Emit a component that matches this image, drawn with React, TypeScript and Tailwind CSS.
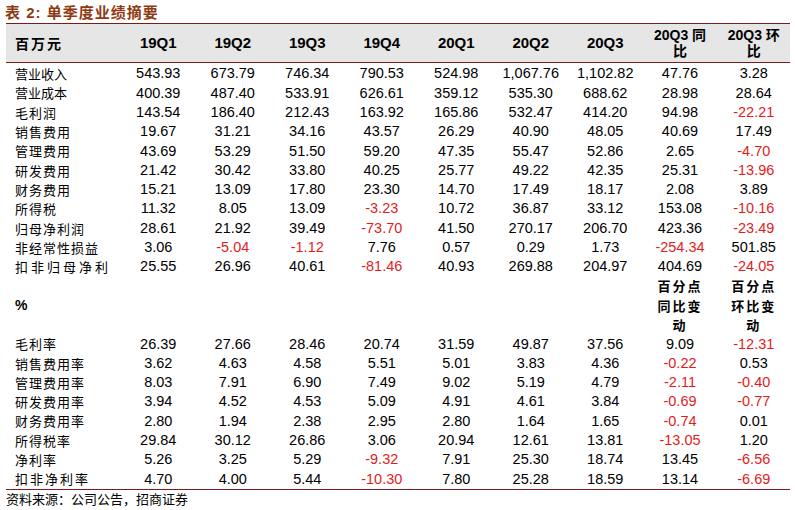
const cols = ["19Q1", "19Q2", "19Q3", "19Q4", "20Q1", "20Q2", "20Q3"];

const amounts: [string, string, string[]][] = [
  ["营业收入", "", ["543.93", "673.79", "746.34", "790.53", "524.98", "1,067.76", "1,102.82", "47.76", "3.28"]],
  ["营业成本", "", ["400.39", "487.40", "533.91", "626.61", "359.12", "535.30", "688.62", "28.98", "28.64"]],
  ["毛利润", "tracking-[1px]", ["143.54", "186.40", "212.43", "163.92", "165.86", "532.47", "414.20", "94.98", "-22.21"]],
  ["销售费用", "tracking-[1px]", ["19.67", "31.21", "34.16", "43.57", "26.29", "40.90", "48.05", "40.69", "17.49"]],
  ["管理费用", "tracking-[1px]", ["43.69", "53.29", "51.50", "59.20", "47.35", "55.47", "52.86", "2.65", "-4.70"]],
  ["研发费用", "tracking-[1px]", ["21.42", "30.42", "33.80", "40.25", "25.77", "49.22", "42.35", "25.31", "-13.96"]],
  ["财务费用", "tracking-[1px]", ["15.21", "13.09", "17.80", "23.30", "14.70", "17.49", "18.17", "2.08", "3.89"]],
  ["所得税", "tracking-[1px]", ["11.32", "8.05", "13.09", "-3.23", "10.72", "36.87", "33.12", "153.08", "-10.16"]],
  ["归母净利润", "tracking-[1px]", ["28.61", "21.92", "39.49", "-73.70", "41.50", "270.17", "206.70", "423.36", "-23.49"]],
  ["非经常性损益", "tracking-[1px]", ["3.06", "-5.04", "-1.12", "7.76", "0.57", "0.29", "1.73", "-254.34", "501.85"]],
  ["扣非归母净利", "tracking-[3px]", ["25.55", "26.96", "40.61", "-81.46", "40.93", "269.88", "204.97", "404.69", "-24.05"]],
];

const ratios: [string, string, string[]][] = [
  ["毛利率", "tracking-[1px]", ["26.39", "27.66", "28.46", "20.74", "31.59", "49.87", "37.56", "9.09", "-12.31"]],
  ["销售费用率", "tracking-[1px]", ["3.62", "4.63", "4.58", "5.51", "5.01", "3.83", "4.36", "-0.22", "0.53"]],
  ["管理费用率", "tracking-[1px]", ["8.03", "7.91", "6.90", "7.49", "9.02", "5.19", "4.79", "-2.11", "-0.40"]],
  ["研发费用率", "tracking-[1px]", ["3.94", "4.52", "4.53", "5.09", "4.91", "4.61", "3.84", "-0.69", "-0.77"]],
  ["财务费用率", "tracking-[1px]", ["2.80", "1.94", "2.38", "2.95", "2.80", "1.64", "1.65", "-0.74", "0.01"]],
  ["所得税率", "tracking-[1px]", ["29.84", "30.12", "26.86", "3.06", "20.94", "12.61", "13.81", "-13.05", "1.20"]],
  ["净利率", "tracking-[1px]", ["5.26", "3.25", "5.29", "-9.32", "7.91", "25.30", "18.74", "13.45", "-6.56"]],
  ["扣非净利率", "tracking-[2px]", ["4.70", "4.00", "5.44", "-10.30", "7.80", "25.28", "18.59", "13.14", "-6.69"]],
];

const grid = "grid grid-cols-[115px_repeat(7,74.5px)_75px_72.5px]";
const cjk = "font-['Noto_Sans_CJK_SC',sans-serif]";
const num = "font-['Liberation_Sans','Noto_Sans_CJK_SC',sans-serif]";

function Row({ label, track, values }: { label: string; track: string; values: string[] }) {
  return (
    <div className={`${grid} h-[19.3px] items-center`}>
      <div className={`${cjk} ${track} pl-[9px] text-[13px] leading-none text-black`}>{label}</div>
      {values.map((v, i) => (
        <div
          key={i}
          className={`${num} text-center text-[14.5px] leading-none ${v.startsWith("-") ? "text-[#e31b1b]" : "text-black"}`}
        >
          {v}
        </div>
      ))}
    </div>
  );
}

export default function App() {
  return (
    <div className="relative h-[510px] w-[795px] overflow-hidden bg-white">
      {/* title */}
      <div className={`${num} h-[23px] pl-[5px] pt-[3px] text-[15px] font-bold leading-[20px] tracking-[1px] text-[#8e3b12]`}>
        表 2: 单季度业绩摘要
      </div>

      <div className="ml-[6px] w-[784px]">
        {/* header */}
        <div className={`${grid} h-[40px] items-center border-y border-[#7a1c1c] bg-[#e6e6e6]`}>
          <div className={`${cjk} pl-[9px] text-[14px] font-bold tracking-[2px] text-black`}>百万元</div>
          {cols.map((c) => (
            <div key={c} className={`${num} text-center text-[15px] font-bold text-black`}>
              {c}
            </div>
          ))}
          <div className={`${num} text-center text-[14px] font-bold leading-[16px] text-black`}>
            20Q3 同<br />比
          </div>
          <div className={`${num} text-center text-[14px] font-bold leading-[16px] text-black`}>
            20Q3 环<br />比
          </div>
        </div>

        <div className="pt-[1px]">
          {amounts.map(([l, t, v]) => (
            <Row key={l} label={l} track={t} values={v} />
          ))}
        </div>

        {/* percent sub-header */}
        <div className={`${grid} h-[57.9px] items-center`}>
          <div className={`${num} pl-[9px] text-[14px] font-bold text-black`}>%</div>
          <div className="col-span-7" />
          <div className={`${cjk} text-center text-[13px] font-bold leading-[19.3px] tracking-[2px] text-black`}>
            百分点<br />同比变<br />动
          </div>
          <div className={`${cjk} text-center text-[13px] font-bold leading-[19.3px] tracking-[2px] text-black`}>
            百分点<br />环比变<br />动
          </div>
        </div>

        <div className="border-b border-[#7a1c1c]">
          {ratios.map(([l, t, v]) => (
            <Row key={l} label={l} track={t} values={v} />
          ))}
        </div>
      </div>

      <div className={`${cjk} h-[18px] pl-[6px] text-[13px] leading-[18px] text-black`}>
        资料来源：公司公告，招商证券
      </div>
    </div>
  );
}
